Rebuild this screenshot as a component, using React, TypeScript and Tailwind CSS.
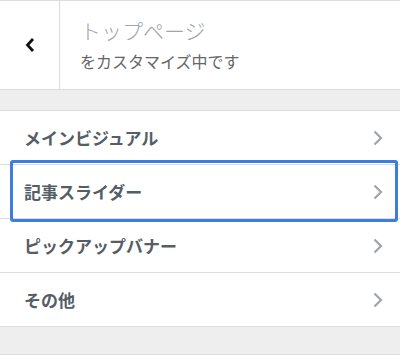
import React from 'react';

const items = ['メインビジュアル', '記事スライダー', 'ピックアップバナー', 'その他'];

// Small right-pointing chevron used on each menu row
const Chevron: React.FC = () => (
  <svg width="12" height="18" viewBox="0 0 12 18" fill="none">
    <path d="M2.5 2.5 L9 9 L2.5 15.5" stroke="#a0a5aa" strokeWidth="2.2" />
  </svg>
);

const App: React.FC = () => {
  return (
    <div
      className="w-[400px] h-[355px] bg-[#eee] overflow-hidden"
      style={{ fontFamily: '"Noto Sans CJK JP", "Noto Sans", sans-serif' }}
    >
      {/* Header with back button */}
      <div className="h-[90px] bg-white border-t border-b border-[#ddd] flex">
        <button className="w-[60px] border-r border-[#ddd] flex items-center justify-center">
          <svg width="12" height="16" viewBox="0 0 12 16" fill="none">
            <path d="M9 2 L3.5 8 L9 14" stroke="#111" strokeWidth="2.8" />
          </svg>
        </button>
        <div className="pl-5 flex flex-col justify-center">
          <div className="text-[21px] leading-[30px] font-light text-[#a0a5aa] -mt-[3px]">トップページ</div>
          <div className="text-[16px] leading-[22px] text-[#666] mt-[5px]">をカスタマイズ中です</div>
        </div>
      </div>

      <div className="h-[20px]" />

      {/* Section list */}
      <ul className="bg-white border-t border-[#ddd]">
        {items.map((label, i) => (
          <li
            key={label}
            className="relative h-[54px] border-b border-[#ddd] flex items-center justify-between pl-6 pr-[16px]"
          >
            <span className="text-[17px] font-semibold text-[#555d66]">{label}</span>
            <Chevron />
            {i === 1 && (
              <div className="absolute top-[-5px] bottom-[-4px] left-[10px] right-[2px] border-[3px] border-[#3d7ddd] rounded-[3px]" />
            )}
          </li>
        ))}
      </ul>

      <div className="h-[27px]" />
      <div className="border-t border-[#ddd] h-[4px]" />
    </div>
  );
};

export default App;
